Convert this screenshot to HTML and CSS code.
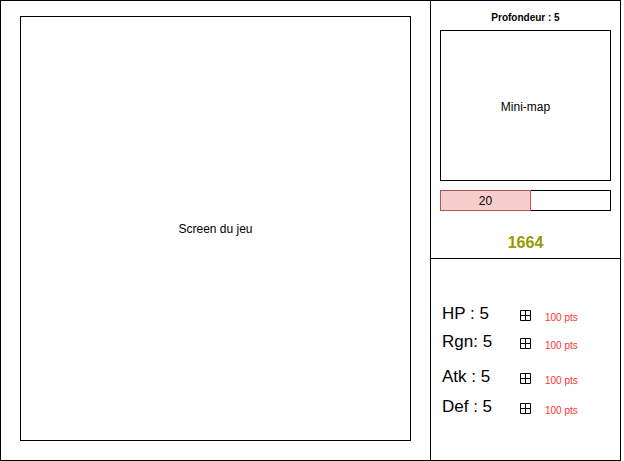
FILE: index.html
```html
<!DOCTYPE html>
<html lang="fr">
<head>
<meta charset="utf-8">
<link rel="stylesheet" href="styles.css">
</head>
<body>
<div class="frame">
  <div class="main">
    <div class="screen">Screen du jeu</div>
  </div>
  <div class="side">
    <div class="side-top">
      <div class="depth">Profondeur : 5</div>
      <div class="minimap">Mini-map</div>
      <div class="bar">
        <div class="bar-fill">20</div>
        <div class="bar-rest"></div>
      </div>
      <div class="score">1664</div>
    </div>
    <div class="stats">
      <div class="stat stat-hp">
        <span class="stat-label">HP : 5</span>
        <svg class="stat-icon" width="11" height="11" viewBox="0 0 11 11"><path d="M0.5 0.5H10.5V10.5H0.5Z M5.5 0.5V10.5 M0.5 5.5H10.5" fill="none" stroke="#000" stroke-width="1"/></svg>
        <span class="stat-cost">100 pts</span>
      </div>
      <div class="stat stat-rgn">
        <span class="stat-label">Rgn: 5</span>
        <svg class="stat-icon" width="11" height="11" viewBox="0 0 11 11"><path d="M0.5 0.5H10.5V10.5H0.5Z M5.5 0.5V10.5 M0.5 5.5H10.5" fill="none" stroke="#000" stroke-width="1"/></svg>
        <span class="stat-cost">100 pts</span>
      </div>
      <div class="stat stat-atk">
        <span class="stat-label">Atk : 5</span>
        <svg class="stat-icon" width="11" height="11" viewBox="0 0 11 11"><path d="M0.5 0.5H10.5V10.5H0.5Z M5.5 0.5V10.5 M0.5 5.5H10.5" fill="none" stroke="#000" stroke-width="1"/></svg>
        <span class="stat-cost">100 pts</span>
      </div>
      <div class="stat stat-def">
        <span class="stat-label">Def : 5</span>
        <svg class="stat-icon" width="11" height="11" viewBox="0 0 11 11"><path d="M0.5 0.5H10.5V10.5H0.5Z M5.5 0.5V10.5 M0.5 5.5H10.5" fill="none" stroke="#000" stroke-width="1"/></svg>
        <span class="stat-cost">100 pts</span>
      </div>
    </div>
  </div>
</div>
</body>
</html>
```
FILE: styles.css
```css
* { box-sizing: border-box; }
html, body { margin: 0; padding: 0; background: #fff; }
body { font-family: "Liberation Sans", Arial, sans-serif; color: #000; }

.frame {
  width: 621px;
  height: 461px;
  border: 1px solid #000;
  display: flex;
}

.main {
  width: 429px;
  padding: 15px 0 0 19px;
}

.screen {
  width: 391px;
  height: 425px;
  border: 1px solid #000;
  display: flex;
  align-items: center;
  justify-content: center;
  font-size: 12px;
}

.side {
  width: 190px;
  border-left: 1px solid #000;
  display: flex;
  flex-direction: column;
}

.side-top {
  height: 258px;
  border-bottom: 1px solid #000;
  padding: 10px 0 0 9px;
}

.depth {
  width: 171px;
  text-align: center;
  font-size: 10px;
  font-weight: bold;
  line-height: 14px;
}

.minimap {
  margin-top: 5px;
  width: 171px;
  height: 151px;
  border: 1px solid #000;
  padding-top: 2px;
  display: flex;
  align-items: center;
  justify-content: center;
  font-size: 12px;
}

.bar {
  margin-top: 9px;
  width: 171px;
  height: 21px;
  display: flex;
}

.bar-fill {
  width: 91px;
  height: 21px;
  background: #f8cecc;
  border: 1px solid #b85450;
  display: flex;
  align-items: center;
  justify-content: center;
  font-size: 12px;
}

.bar-rest {
  flex: 1;
  height: 21px;
  border: 1px solid #000;
  border-left: none;
}

.score {
  margin-top: 22px;
  width: 171px;
  text-align: center;
  font-size: 16px;
  font-weight: bold;
  line-height: 19px;
  color: #999900;
}

.stats {
  flex: 1;
  padding: 44px 0 0 11px;
}

.stat {
  display: flex;
  align-items: center;
  height: 22px;
}

.stat-rgn { margin-top: 6px; }
.stat-atk { margin-top: 13px; }
.stat-def { margin-top: 8px; }

.stat-label {
  width: 78px;
  font-size: 17px;
  line-height: 20px;
}

.stat-icon {
  display: block;
  margin-top: 2px;
}

.stat-cost {
  margin-left: 14px;
  margin-top: 6px;
  font-size: 10px;
  color: #ff3333;
}
```
